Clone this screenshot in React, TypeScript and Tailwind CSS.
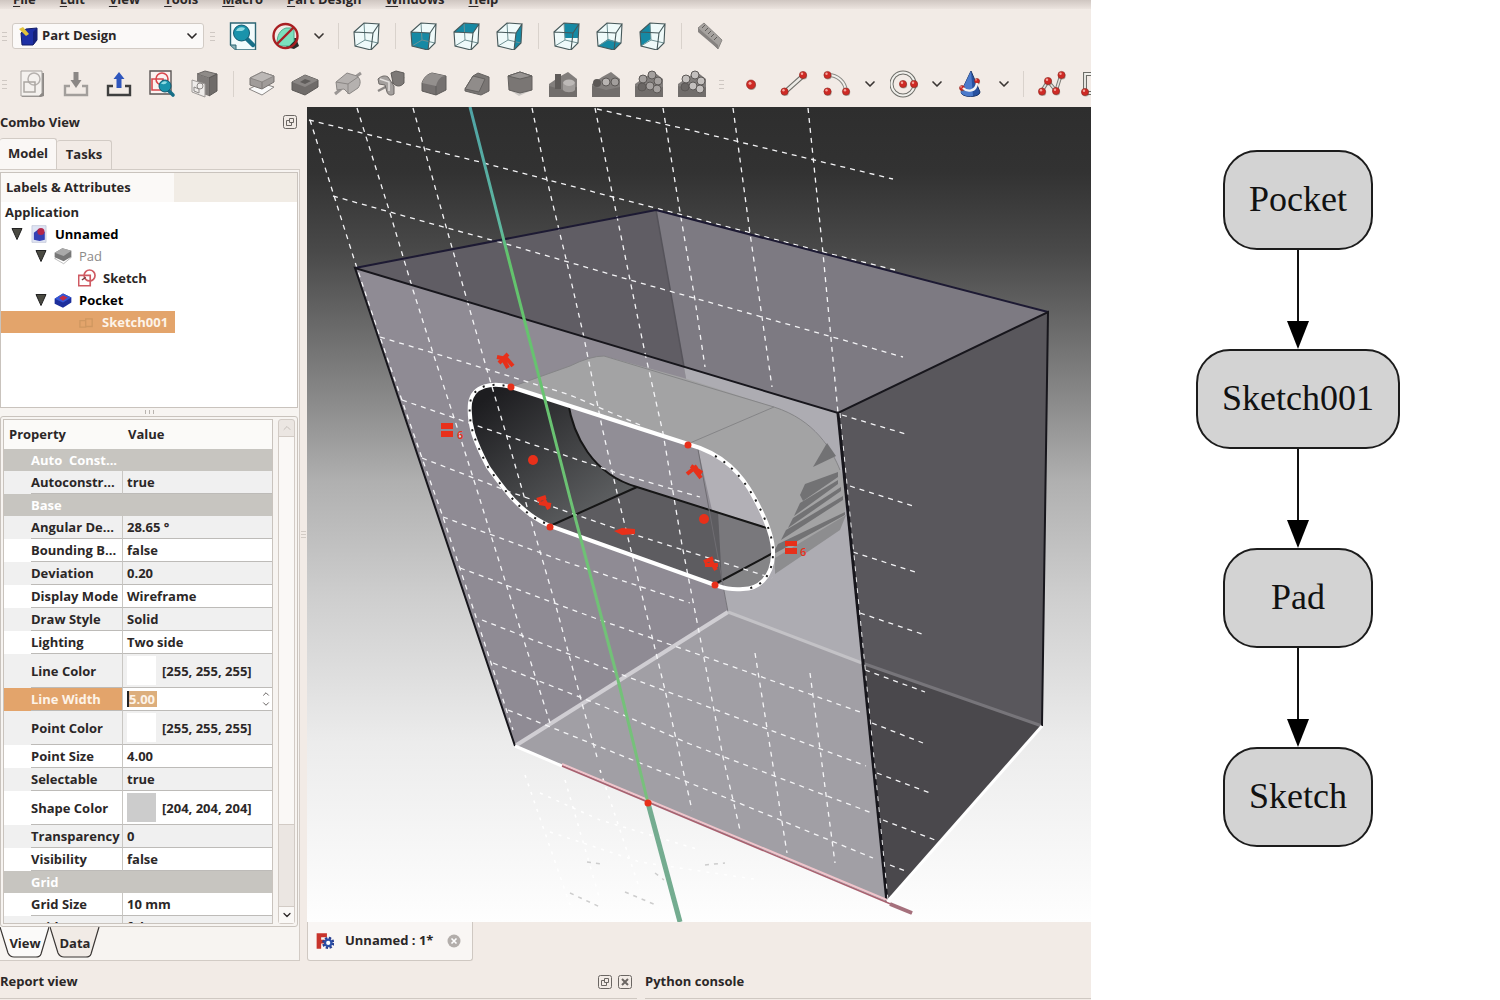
import { Fragment } from "react";
import type { ReactNode } from "react";
import { ChevronDown, ChevronUp } from "lucide-react";

const MENU = ["File", "Edit", "View", "Tools", "Macro", "Part Design", "Windows", "Help"];

/* ---------- icons ---------- */

function Icon({ children, size = "size-[28px]" }: { children: ReactNode; size?: string }) {
  return (
    <svg viewBox="0 0 28 28" className={`${size} shrink-0`} fill="none" aria-hidden="true">
      {children}
    </svg>
  );
}

const CUBE_FACES = {
  front: "M1 10 20 11 18 28 2 24Z",
  top: "M1 10 11 1 26 2 20 11Z",
  right: "M20 11 26 2 25 21 18 28Z",
  rear: "M11 1 26 2 25 16 12 16Z",
  bottom: "M2 24 12 17 25 21 18 28Z",
  left: "M1 10 11 1 12 17 2 24Z",
};

function CubeIcon({ face }: { face?: keyof typeof CUBE_FACES }) {
  return (
    <Icon>
      <path d="M1 10 11 1 26 2 25 21 18 28 2 24Z" fill="#effafa" />
      {face && <path d={CUBE_FACES[face]} fill="#1689a4" />}
      <path d="M11 1 12 18 25 21M12 18 2 24" stroke="#6f9193" strokeWidth="1" />
      <path d="M1 10 20 11 18 28 2 24ZM1 10 11 1 26 2 20 11M26 2 25 21 18 28" stroke="#46585a" strokeWidth="1.1" />
    </Icon>
  );
}

function Ball({ x, y, r = 3.6 }: { x: number; y: number; r?: number }) {
  return (
    <g>
      <circle cx={x + 0.6} cy={y + 1} r={r} fill="#6d6a60" opacity="0.5" />
      <circle cx={x} cy={y} r={r} fill="#cf2a25" stroke="#8d2620" strokeWidth="0.6" />
      <circle cx={x - 1} cy={y - 1.2} r={r / 3} fill="#f4a49c" />
    </g>
  );
}

const FitIcon = () => (
  <Icon>
    <path d="M1.500 1h25v27H7l-5.500-5Z" fill="#f2fbfc" stroke="#2c6674" strokeWidth="1.400" />
    <path d="M1.500 23H7v5" fill="#8ab2b8" stroke="#2c6674" />
    <path d="m17 16 7 7" stroke="#176f88" strokeWidth="4.500" strokeLinecap="round" />
    <circle cx="12.500" cy="11" r="8" fill="#1a93ab" stroke="#145a70" />
    <path d="M7 9a6 5 0 0 1 9-3c-1 4-5 3-9 3Z" fill="#8fdbe2" />
  </Icon>
);

const DrawStyleIcon = () => (
  <Icon>
    <path d="M20 16h4l3 8-5 3-8-2Z" fill="#2a2a2a" />
    <path d="M5 22c0-9 3-14 9-16h8v13l-5 5H6Z" fill="#7be0bd" stroke="#4fa98c" />
    <circle cx="13.500" cy="14" r="12" stroke="#a81f22" strokeWidth="2.400" />
    <path d="m5 22 17-17" stroke="#a81f22" strokeWidth="2.400" />
  </Icon>
);

const RulerIcon = () => (
  <Icon>
    <path d="M2 6 8 1l18 17-4 9Z" fill="#a5a19e" stroke="#8b8784" />
    <path d="m2 6 20 17v4L2 10Z" fill="#868280" />
    <path d="m9 3-3 3M12 6l-3 3M15 9l-3 3M18 12l-3 3M21 15l-3 3" stroke="#5f5c5a" />
  </Icon>
);

const SketchNewIcon = () => (
  <Icon>
    <path d="M3 3h22v23l-3 1H3Z" fill="#8d8986" />
    <path d="M2 1h21v22l-3 3H2Z" fill="#f4f1ee" stroke="#a5a19e" />
    <circle cx="15" cy="9" r="6" stroke="#b5b1ae" strokeWidth="1.500" />
    <path d="M5 12h11v10H5Z" stroke="#aaa6a3" strokeWidth="1.500" />
  </Icon>
);

function TrayIcon({ arrow, tray, up }: { arrow: string; tray: string; up?: boolean }) {
  return (
    <Icon>
      <path d="M8 16H3v9h22v-9h-5" stroke={tray} strokeWidth="2.400" />
      <path d={up ? "M14 2 19.500 9h-3v9h-5V9h-3Z" : "M11.500 2h5v8h3L14 18l-5.500-8h3Z"} fill={arrow} />
    </Icon>
  );
}

const SketchViewIcon = () => (
  <Icon>
    <path d="M2 1h21v23H2Z" fill="#fbf2f0" stroke="#5b5654" strokeWidth="1.400" />
    <circle cx="14" cy="9" r="6" stroke="#d8474c" strokeWidth="1.600" />
    <path d="M4 9h11v11H4Z" stroke="#d8474c" strokeWidth="1.600" />
    <path d="m20 20 5 5" stroke="#176f88" strokeWidth="3.600" strokeLinecap="round" />
    <circle cx="17" cy="16" r="6" fill="#1a93ab" stroke="#145a70" />
    <path d="M13 14a4 4 0 0 1 6-2c-1 3-4 2-6 2Z" fill="#8fdbe2" />
  </Icon>
);

const MapSketchIcon = () => (
  <Icon>
    <path d="m6 4 8-3 12 3-8 4Z" fill="#8f8b88" stroke="#6b6765" />
    <path d="m18 8 8-4v17l-8 5Z" fill="#6f6b69" stroke="#5c5957" />
    <path d="m6 4 12 4v18L6 22Z" fill="#807c7a" />
    <path d="m1 10 13 4v13L1 22Z" fill="#efecea" stroke="#9d9997" />
    <circle cx="9" cy="16" r="3" stroke="#8d8987" />
    <path d="m3 17 5 2v4l-5-2Z" stroke="#8d8987" />
  </Icon>
);

const PadIcon = () => (
  <Icon>
    <path d="m1 19 12-6 13 4-12 8Z" fill="#fafafa" stroke="#8b8785" />
    <path d="m2 8 12-6 12 4v6l-12 7-12-4Z" fill="#a09c9a" stroke="#777371" />
    <path d="m2 8 12-6 12 4-12 6Z" fill="#bcb8b6" stroke="#8b8785" />
    <path d="M14 12v7" stroke="#7d7977" />
  </Icon>
);

const PocketIcon = () => (
  <Icon>
    <path d="m1 12 13-7 13 5v7l-13 8-13-5Z" fill="#6f6b69" stroke="#5b5856" />
    <path d="m1 12 13-7 13 5-13 7Z" fill="#8a8684" />
    <path d="m9 12 5-3 6 2-6 3Z" fill="#5f5c5a" />
  </Icon>
);

const RevolveIcon = () => (
  <Icon>
    <path d="m1 24 6-5M20 8l7-5" stroke="#9a9694" strokeWidth="3" />
    <path d="M2 12 13 3l10 3c4 3 4 8 1 12l-9 6-5-5-7 1Z" fill="#b5b1af" stroke="#8b8785" />
    <path d="m2 12 12 2 10-7M14 14v10" stroke="#8b8785" />
  </Icon>
);

const GrooveIcon = () => (
  <Icon>
    <path d="m1 21 26-14" stroke="#8b8785" strokeWidth="2.500" />
    <path d="M1 9c3-3 7-4 10-2l6 9v8c-3 2-6 1-7-2l-2-7-6-1Z" fill="#a4a09e" stroke="#6d6967" />
    <path d="m14 3 5-2 8 2v10c-3 4-8 4-11 0Z" fill="#7d7977" stroke="#5f5c5a" />
    <path d="m3 9 9 3v9" stroke="#e3e0de" strokeWidth="1.500" />
  </Icon>
);

const FilletIcon = () => (
  <Icon>
    <path d="M2 13c2-6 6-9 10-10l14 3v14l-10 5-14-4Z" fill="#757170" stroke="#5f5c5a" />
    <path d="M2 13c2-6 6-9 10-10l14 3c-5 0-8 3-10 10Z" fill="#94908e" />
    <path d="M16 16v9" stroke="#5f5c5a" />
  </Icon>
);

const ChamferIcon = () => (
  <Icon>
    <path d="m2 19 8-13 5-3 11 4v14l-8 4-16-4Z" fill="#7a7674" stroke="#64615f" />
    <path d="m2 19 8-13 12 3-6 13Z" fill="#908c8a" stroke="#64615f" />
  </Icon>
);

const DraftIcon = () => (
  <Icon>
    <path d="m2 19 12-3 12 4-13 6Z" fill="#cbc7c4" />
    <path d="m2 6 12-4 12 4v14l-12 3-11-3Z" fill="#7a7674" stroke="#64615f" />
    <path d="m2 6 12-4 12 4-12 3Z" fill="#989492" stroke="#64615f" />
  </Icon>
);

function PatternIcon({ kind }: { kind: "mirror" | "linear" | "polar" | "multi" }) {
  return (
    <Icon>
      <path d="M0 14 10 7l9-5 9 7v18H0Z" fill="#827e7c" />
      <path d="m0 16 14 4 14-3v10H0Z" fill="#716d6b" />
      {kind === "mirror" && (
        <>
          <path d="M6 4h6v15H6Z" fill="#5f5b59" />
          <ellipse cx="20" cy="13" rx="6" ry="3.500" fill="#bdb9b7" />
          <path d="M14 13v7c2 3 10 3 12 0v-7c-2 4-10 4-12 0Z" fill="#a09c9a" />
        </>
      )}
      {kind === "linear" && (
        <>
          <circle cx="5" cy="13" r="4" fill="#5c5856" />
          <circle cx="14" cy="12" r="4" fill="#b8b4b2" stroke="#5c5856" />
          <circle cx="23" cy="12" r="4" fill="#a29e9c" stroke="#5c5856" />
        </>
      )}
      {(kind === "polar" || kind === "multi") && (
        <g fill={kind === "polar" ? "#a4a09e" : "#c4c0be"} stroke="#5c5856">
          <circle cx="17" cy="5" r="4" />
          <circle cx="8" cy="9" r="4" />
          <circle cx="23" cy="11" r="4" />
          <circle cx="7" cy="17" r="4" fill="#6a6664" />
          <circle cx="15" cy="16" r="4" />
          <circle cx="22" cy="19" r="4" />
        </g>
      )}
    </Icon>
  );
}

const PointIcon = () => (
  <Icon>
    <Ball x={14} y={14.5} r={4.5} />
  </Icon>
);

const LineIcon = () => (
  <Icon>
    <path d="m5 22 19-17" stroke="#6d6d68" strokeWidth="5" />
    <path d="m5 22 19-17" stroke="#ecebe6" strokeWidth="2.600" />
    <Ball x={4.5} y={21.5} />
    <Ball x={23} y={5} />
  </Icon>
);

const ArcIcon = () => (
  <Icon>
    <path d="M5 5c10 0 17 7 18 16" stroke="#8b8b86" strokeWidth="4" />
    <path d="M5 5c10 0 17 7 18 16" stroke="#f1f0ec" strokeWidth="2" />
    <Ball x={4.5} y={5} />
    <Ball x={4.5} y={21.5} />
    <Ball x={23} y={21.5} />
  </Icon>
);

const CircleIcon = () => (
  <Icon>
    <circle cx="13" cy="14" r="11.500" stroke="#6d6d68" strokeWidth="4" />
    <circle cx="13" cy="14" r="11.500" stroke="#f1f0ec" strokeWidth="2" />
    <Ball x={13} y={14} />
    <Ball x={24} y={14} />
  </Icon>
);

const ConicIcon = () => (
  <Icon>
    <path d="m14 1 9 21c0 6-19 6-19 0Z" fill="#27519f" stroke="#1b3568" />
    <path d="m14 1 2 25c-5 1-12-1-12-4Z" fill="#4b7acb" />
    <Ball x={5} y={18} r={2.5} />
    <Ball x={20} y={11} r={2.5} />
    <path d="M6 18c4 4 13 4 14-5" stroke="#f4f4f4" strokeWidth="2.400" />
  </Icon>
);

const PolylineIcon = () => (
  <Icon>
    <path d="m4 21 6-10 8 10 5-16" stroke="#777772" strokeWidth="3.600" />
    <path d="m4 21 6-10 8 10 5-16" stroke="#e5e4df" strokeWidth="1.600" />
    <Ball x={4} y={21.5} />
    <Ball x={10} y={11} />
    <Ball x={18} y={21} />
    <Ball x={23.5} y={5} />
  </Icon>
);

const RectIcon = () => (
  <Icon>
    <path d="M4 4h22v19H4Z" stroke="#6d6d68" strokeWidth="4" />
    <path d="M4 4h22v19H4Z" stroke="#f1f0ec" strokeWidth="1.800" />
    <Ball x={4} y={22} />
  </Icon>
);

const FloatIcon = () => (
  <svg viewBox="0 0 14 14" className="size-[14px]" fill="none" stroke="#6b6663" aria-hidden="true">
    <rect x="0.5" y="0.500" width="13" height="13" rx="2" />
    <path d="M6.500 3.500h4v4h-4ZM6.500 5.500h-3v5h5v-3" />
  </svg>
);

const CloseIcon = () => (
  <svg viewBox="0 0 14 14" className="size-[14px]" fill="none" stroke="#6b6663" aria-hidden="true">
    <rect x="0.5" y="0.500" width="13" height="13" rx="2" />
    <path d="m4 4 6 6M10 4l-6 6" strokeWidth="2" />
  </svg>
);

/* ---------- toolbars ---------- */

type ToolItem = { name: string; icon: ReactNode } | "sep" | "menu" | "grip";

const VIEW_TOOLS: ToolItem[] = [
  { name: "Fit all", icon: <FitIcon /> },
  { name: "Draw style", icon: <DrawStyleIcon /> },
  "menu",
  "sep",
  { name: "Axonometric", icon: <CubeIcon /> },
  "sep",
  { name: "Front", icon: <CubeIcon face="front" /> },
  { name: "Top", icon: <CubeIcon face="top" /> },
  { name: "Right", icon: <CubeIcon face="right" /> },
  "sep",
  { name: "Rear", icon: <CubeIcon face="rear" /> },
  { name: "Bottom", icon: <CubeIcon face="bottom" /> },
  { name: "Left", icon: <CubeIcon face="left" /> },
  "sep",
  { name: "Measure distance", icon: <RulerIcon /> },
];

const PART_TOOLS: ToolItem[] = [
  { name: "Create sketch", icon: <SketchNewIcon /> },
  { name: "Edit sketch", icon: <TrayIcon arrow="#8b8785" tray="#a29e9b" /> },
  { name: "Leave sketch", icon: <TrayIcon arrow="#2f56bd" tray="#3f3f3f" up /> },
  { name: "View sketch", icon: <SketchViewIcon /> },
  { name: "Map sketch to face", icon: <MapSketchIcon /> },
  "sep",
  { name: "Pad", icon: <PadIcon /> },
  { name: "Pocket", icon: <PocketIcon /> },
  { name: "Revolution", icon: <RevolveIcon /> },
  { name: "Groove", icon: <GrooveIcon /> },
  { name: "Fillet", icon: <FilletIcon /> },
  { name: "Chamfer", icon: <ChamferIcon /> },
  { name: "Draft", icon: <DraftIcon /> },
  { name: "Mirrored", icon: <PatternIcon kind="mirror" /> },
  { name: "Linear pattern", icon: <PatternIcon kind="linear" /> },
  { name: "Polar pattern", icon: <PatternIcon kind="polar" /> },
  { name: "Multi transform", icon: <PatternIcon kind="multi" /> },
  "grip",
  { name: "Point", icon: <PointIcon /> },
  { name: "Line", icon: <LineIcon /> },
  { name: "Arc", icon: <ArcIcon /> },
  "menu",
  { name: "Circle", icon: <CircleIcon /> },
  "menu",
  { name: "Conic", icon: <ConicIcon /> },
  "menu",
  "sep",
  { name: "Polyline", icon: <PolylineIcon /> },
  { name: "Rectangle", icon: <RectIcon /> },
];

function Grip({ className }: { className: string }) {
  return (
    <span className={`flex shrink-0 flex-col gap-[3px] ${className}`}>
      <i className="h-px w-[5px] bg-[#cfc8c3]" />
      <i className="h-px w-[5px] bg-[#cfc8c3]" />
      <i className="h-px w-[5px] bg-[#cfc8c3]" />
    </span>
  );
}

function Tools({ items }: { items: ToolItem[] }) {
  return items.map((item, i) => {
    if (item === "sep") {
      return (
        <span key={i} className="flex w-[14px] shrink-0 justify-center">
          <i className="h-[26px] w-px bg-[#d9d2cc]" />
        </span>
      );
    }
    if (item === "grip") return <Grip key={i} className="w-[16px] items-center" />;
    if (item === "menu") {
      return (
        <button key={i} type="button" aria-label="More" className="flex w-[24px] shrink-0 justify-center">
          <ChevronDown className="size-[16px] text-[#3a3533]" strokeWidth={2.5} />
        </button>
      );
    }
    return (
      <button key={i} type="button" aria-label={item.name} className="flex w-[43px] shrink-0 justify-center">
        {item.icon}
      </button>
    );
  });
}

/* ---------- combo view ---------- */

const DocIcon = () => (
  <Icon size="size-[18px]">
    <path d="M3 1h22v26H3Z" fill="#dfe4f4" stroke="#b9bfd2" />
    <path d="m6 12 8-6 9 5v12l-8 2-9-2Z" fill="#3440b4" />
    <circle cx="17" cy="10" r="5.500" fill="#b3264a" />
  </Icon>
);

const TreePadIcon = () => (
  <Icon size="size-[18px]">
    <path d="m1 18 12-6 14 4-12 10Z" fill="#fff" stroke="#999" />
    <path d="m1 9 12-7 14 4v9l-12 7-14-6Z" fill="#777" />
    <path d="m1 9 12-7 14 4-12 8Z" fill="#a9a9a9" />
  </Icon>
);

const TreeSketchIcon = () => (
  <Icon size="size-[18px]">
    <circle cx="18" cy="10" r="8.500" stroke="#cf5a62" strokeWidth="2.600" />
    <path d="M1 10h18v16H1Z" stroke="#cf5a62" strokeWidth="2.600" />
    <path d="m6 17 6-4" stroke="#6d3a3d" strokeWidth="2" />
  </Icon>
);

const TreePocketIcon = () => (
  <Icon size="size-[18px]">
    <path d="m1 12 13-8 13 6v8l-13 8-13-6Z" fill="#1d2f9c" />
    <path d="m1 12 13-8 13 6-13 8Z" fill="#3557d6" />
    <path d="m8 11 6-4 7 3-7 5Z" fill="#c22b44" />
  </Icon>
);

const FaintSketchIcon = () => (
  <Icon size="size-[18px]">
    <path d="M3 12h9v10H3ZM12 9h10v12H12Z" stroke="#cf9760" strokeWidth="2" />
  </Icon>
);

type TreeNode = { label: string; indent: string; icon: ReactNode; open?: boolean; tone?: string };

const TREE: TreeNode[] = [
  { label: "Unnamed", indent: "pl-[10px]", icon: <DocIcon />, open: true, tone: "text-black" },
  { label: "Pad", indent: "pl-[34px]", icon: <TreePadIcon />, open: true, tone: "font-medium text-[#8c8a89]" },
  { label: "Sketch", indent: "pl-[58px]", icon: <TreeSketchIcon /> },
  { label: "Pocket", indent: "pl-[34px]", icon: <TreePocketIcon />, open: true, tone: "text-black" },
];

function ModelTree() {
  return (
    <div className="h-[236px] shrink-0 border border-[#c9c3bd] bg-white">
      <div className="flex h-[29px] bg-[#f1ece5]">
        <span className="w-[173px] bg-[#fbf9f7] pl-[5px] leading-[28px]">Labels &amp; Attributes</span>
      </div>
      <ul className="leading-[22px]">
        <li className="h-[21px] pl-[4px] leading-[20px]">Application</li>
        {TREE.map((node) => (
          <li key={node.label} className={`flex h-[22px] items-center ${node.indent}`}>
            <span className="flex w-[19px] shrink-0">
              {node.open && (
                <svg viewBox="0 0 12 12" className="size-[12px]" aria-hidden="true">
                  <path d="M1 0.500h10L6 11.500Z" fill="#4a4a42" stroke="#222" />
                </svg>
              )}
            </span>
            {node.icon}
            <span className={`pl-[7px] ${node.tone ?? ""}`}>{node.label}</span>
          </li>
        ))}
        <li className="flex h-[22px] w-[174px] items-center bg-[#e3a46b] pl-[77px] text-[#fdf3e8]">
          <FaintSketchIcon />
          <span className="pl-[6px]">Sketch001</span>
        </li>
      </ul>
    </div>
  );
}

type Property = { group: string } | { name: string; value: string; swatch?: string; editing?: boolean };

const PROPERTIES: Property[] = [
  { group: "Auto  Const..." },
  { name: "Autoconstr...", value: "true" },
  { group: "Base" },
  { name: "Angular De...", value: "28.65 °" },
  { name: "Bounding B...", value: "false" },
  { name: "Deviation", value: "0.20" },
  { name: "Display Mode", value: "Wireframe" },
  { name: "Draw Style", value: "Solid" },
  { name: "Lighting", value: "Two side" },
  { name: "Line Color", value: "[255, 255, 255]", swatch: "bg-white" },
  { name: "Line Width", value: "5.00", editing: true },
  { name: "Point Color", value: "[255, 255, 255]", swatch: "bg-white" },
  { name: "Point Size", value: "4.00" },
  { name: "Selectable", value: "true" },
  { name: "Shape Color", value: "[204, 204, 204]", swatch: "bg-[#cccccc]" },
  { name: "Transparency", value: "0" },
  { name: "Visibility", value: "false" },
  { group: "Grid" },
  { name: "Grid Size", value: "10 mm" },
  { name: "Grid Snap", value: "false" },
];

function PropertyTable() {
  return (
    <table className="w-full table-fixed border-separate border-spacing-0 text-left">
      <colgroup>
        <col className="w-[27px]" />
        <col className="w-[92px]" />
        <col />
      </colgroup>
      <thead>
        <tr className="h-[29px] bg-[#fbfaf8]">
          <th colSpan={2} className="p-0 pl-[5px]">
            Property
          </th>
          <th className="p-0 pl-[5px]">Value</th>
        </tr>
      </thead>
      <tbody>
        {PROPERTIES.map((prop, i) => {
          if ("group" in prop) {
            return (
              <tr key={i} className="h-[22px] bg-[#c7c5c0] text-white">
                <td />
                <th colSpan={2} className="p-0 leading-[20px] whitespace-pre">
                  {prop.group}
                </th>
              </tr>
            );
          }
          const tint = i % 2 ? "bg-[#f0f0f0]" : "bg-white";
          const row = prop.editing ? "bg-white" : tint;
          const label = prop.editing ? "bg-[#e3a46b] text-[#fdf3e8]" : "";
          return (
            <tr key={i} className={`${prop.swatch ? "h-[34px]" : "h-[23px]"} ${row}`}>
              <td className={label} />
              <td
                className={`border-r border-b border-r-[#c9c7c3] border-b-[#bdbbb8] p-0 leading-[20px] whitespace-nowrap ${label}`}
              >
                <span id={`prop-${i}`}>{prop.name}</span>
              </td>
              <td className="border-b border-[#bdbbb8] p-0 pl-[4px] leading-[20px] whitespace-nowrap">
                {prop.editing ? (
                  <span className="flex h-[22px] items-center justify-between pr-px">
                    <span className="flex border-l-2 border-[#222] bg-[#dcae7c]">
                      <input
                        type="text"
                        aria-labelledby={`prop-${i}`}
                        defaultValue={prop.value}
                        className="h-[16px] w-[28px] text-[#fdf3e8]"
                      />
                    </span>
                    <span className="flex flex-col text-[#4b4644]">
                      <ChevronUp className="size-[10px]" />
                      <ChevronDown className="size-[10px]" />
                    </span>
                  </span>
                ) : prop.swatch ? (
                  <span className="flex items-center gap-[6px]">
                    <i className={`size-[29px] ${prop.swatch}`} />
                    {prop.value}
                  </span>
                ) : (
                  prop.value
                )}
              </td>
            </tr>
          );
        })}
      </tbody>
    </table>
  );
}

function BottomTab({ label, active }: { label: string; active?: boolean }) {
  return (
    <button type="button" className="relative h-[31px] w-[50px] leading-[28px]">
      <svg viewBox="0 0 50 31" className="absolute inset-0 size-full" aria-hidden="true">
        <path d="M0 0 8 26q2 4 6 4h22q4 0 5-3L49 0" fill={active ? "#fbfaf9" : "#f1ebe6"} stroke="#3a3634" strokeWidth="1.200" />
      </svg>
      <span className="relative">{label}</span>
    </button>
  );
}

function ComboView() {
  return (
    <aside className="flex w-[300px] shrink-0 flex-col">
      <div className="flex h-[30px] shrink-0 items-center justify-between pr-[3px]">
        <h2 className="leading-[20px]">Combo View</h2>
        <button type="button" aria-label="Float panel">
          <FloatIcon />
        </button>
      </div>
      <div role="tablist" className="flex h-[32px] shrink-0 items-end">
        <button
          role="tab"
          aria-selected="true"
          type="button"
          className="h-[31px] w-[57px] rounded-t-[3px] border border-b-0 border-l-0 border-[#d2cbc5] bg-[#faf7f5]"
        >
          Model
        </button>
        <button
          role="tab"
          aria-selected="false"
          type="button"
          className="h-[29px] w-[55px] rounded-t-[3px] border border-b-0 border-l-0 border-[#d2cbc5]"
        >
          Tasks
        </button>
      </div>
      <div className="flex min-h-0 flex-1 flex-col border border-l-0 border-[#d2cbc5] bg-[#f7f4f1] pt-[2px] pr-px">
        <ModelTree />
        <div className="flex h-[8px] shrink-0 items-center justify-center gap-[3px]">
          <i className="h-[4px] w-px bg-[#b9b4af]" />
          <i className="h-[4px] w-px bg-[#b9b4af]" />
          <i className="h-[4px] w-px bg-[#b9b4af]" />
        </div>
        <div className="flex min-h-0 flex-1 gap-[5px] rounded-[3px] border border-[#c9c3bd] p-[2px]">
          <div className="min-h-0 flex-1 overflow-hidden border border-[#c9c3bd]">
            <PropertyTable />
          </div>
          <div className="flex w-[17px] flex-col rounded-[3px] border border-[#d2cbc5] bg-[#ebe6e2]">
            <button
              type="button"
              aria-label="Scroll up"
              className="flex h-[17px] items-center justify-center border-b border-[#d2cbc5] text-[#c5bfba]"
            >
              <ChevronUp className="size-[12px]" />
            </button>
            <div className="h-[388px] border-b border-[#d2cbc5] bg-[#faf8f6]" />
            <div className="flex-1" />
            <button
              type="button"
              aria-label="Scroll down"
              className="flex h-[17px] items-center justify-center border-t border-[#d2cbc5] bg-[#faf8f6]"
            >
              <ChevronDown className="size-[12px]" strokeWidth={2.5} />
            </button>
          </div>
        </div>
        <div className="flex h-[33px] shrink-0">
          <BottomTab label="View" active />
          <BottomTab label="Data" />
        </div>
      </div>
    </aside>
  );
}

/* ---------- 3D view ---------- */

const GRID_STEEP = [
  "310,120 355,262 380,337 422,458 443,517 477,620 513,730",
  "357,108 390,213 413,290 433,353 457,427 477,490 507,587 550,723",
  "413,108 447,230 467,300 487,370 507,437 530,517 557,610 583,707 597,757",
  "532,108 547,180 567,263 583,333 602,427 618,497 640,587 665,690 692,810",
  "595,108 613,197 630,280 645,353 663,433 682,545 700,637 723,757 740,830",
  "663,108 678,200 695,300 705,367",
  "755,653 787,853",
  "733,108 750,233 762,317 772,387",
  "810,673 835,863",
  "808,108 823,253 838,413",
];

const GRID_CROSS = [
  "597,109 690,130 893,179",
  "309,120 480,162 613,197 656,208 823,252 895,270",
  "333,196 447,228 503,243 630,280 762,317 903,357",
  "842,415 909,435",
  "380,337 483,368 570,395 640,425",
  "850,486 913,506",
  "402,400 472,424 620,474 700,497",
  "853,552 915,572",
  "422,458 510,492 620,530 772,578",
  "860,613 922,634",
  "443,517 560,560 690,603",
  "865,670 925,692",
  "460,568 600,620 700,655 860,712",
  "872,723 923,743",
  "482,620 620,674 690,700 866,766",
  "877,773 930,793",
  "493,663 600,705 690,744 872,813",
  "883,820 935,840",
  "508,710 690,783 873,858",
  "890,865 908,872",
];

const GRID_FLOOR = [
  "525,775 570,905",
  "565,780 600,900",
  "600,770 640,890",
  "540,793 600,820 700,850",
  "550,832 640,862 760,880",
];

const GRID_SHADOW = ["570,893 600,907", "625,892 656,905", "587,862 602,864", "655,873 664,880", "705,865 725,863"];

const SLOT =
  "M511 387 688 444C724 454 742 474 755 499 768 523 774 541 773 555 772 578 758 589 743 589 731 590 724 588 715 585L550 526C520 513 503 488 488 467 475 442 468 425 470 403 473 385 492 382 511 387Z";

const SLOT_BACK = "M568 402C573 435 592 474 637 487L771 529 800 500 760 440 690 430Z";

const DOTS = [
  [511, 387],
  [688, 445],
  [550, 527],
  [715, 585],
  [648, 803],
];

const STRIPES = [
  "827,443 836,456 813,467",
  "838,472 838,477 803,501 800,495 805,484",
  "838,480 838,484 794,516 800,503",
  "841,487 841,491 788,528 793,518",
  "843,496 843,500 781,540 786,530",
  "845,512 845,515 772,555 778,544",
];

function Viewport() {
  return (
    <svg
      viewBox="307 107 784 815"
      preserveAspectRatio="xMidYMid slice"
      className="min-h-0 w-full flex-1"
      role="img"
      aria-label="3D view of the pocketed box"
    >
      <defs>
        <linearGradient id="sky" x1="0" y1="0" x2="0" y2="1">
          <stop offset="0" stopColor="#2e2e2e" />
          <stop offset="0.080" stopColor="#323232" />
          <stop offset="0.180" stopColor="#4a4a4a" />
          <stop offset="0.360" stopColor="#8a8a8a" />
          <stop offset="0.460" stopColor="#b0b0b0" />
          <stop offset="0.600" stopColor="#cecece" />
          <stop offset="0.780" stopColor="#ececec" />
          <stop offset="1" stopColor="#fefefe" />
        </linearGradient>
        <linearGradient id="bore" gradientUnits="userSpaceOnUse" x1="490" y1="395" x2="590" y2="530">
          <stop offset="0" stopColor="#1d1d20" />
          <stop offset="0.500" stopColor="#3f4042" />
          <stop offset="1" stopColor="#616365" />
        </linearGradient>
        <linearGradient id="axis" gradientUnits="userSpaceOnUse" x1="0" y1="107" x2="0" y2="922">
          <stop offset="0" stopColor="#4fa3a6" />
          <stop offset="0.150" stopColor="#5fb9a0" />
          <stop offset="0.180" stopColor="#62c46c" />
          <stop offset="0.840" stopColor="#78c07c" />
          <stop offset="1" stopColor="#7db79a" />
        </linearGradient>
        <clipPath id="slot">
          <path d={SLOT} />
        </clipPath>
      </defs>
      <rect x="-1000" y="107" width="3400" height="815" fill="url(#sky)" />

      {/* box faces */}
      <path d="M355 268 656 210 684 367Z" fill="#605d64" />
      <path d="M656 210 1048 312 838 413 684 367Z" fill="#7d7a82" />
      <path d="M838 413 1048 312 1042 726 887 902Z" fill="#59575c" />
      <path d="M862 663 1042 726 887 902Z" fill="#4a484c" />
      <path d="M355 268 684 367 728 612 515 746Z" fill="#8f8b94" />
      <path d="M684 367 838 413 862 663 728 612Z" fill="#adacb2" />
      <path d="M515 746 728 612 862 663 887 902Z" fill="#a19fa5" />

      {/* outer wall of the pocket */}
      <path
        d="M511 387 570 366Q590 356 604 356L684 378 774 407C815 420 838 455 847 490 848 515 840 530 815 545L775 570 688 444Z"
        fill="#a3a3a4"
      />
      <path
        d="M511 387 570 366Q590 356 604 356L774 407C815 420 832 450 840 470M690 443 774 407"
        stroke="#858587"
        fill="none"
      />
      <path d="M846 515 840 530 775 574 775 558Z" fill="#8d8d8f" />
      {STRIPES.map((points) => (
        <polygon key={points} points={points} fill="#727274" />
      ))}

      <g clipPath="url(#slot)">
        <path d={SLOT} fill="url(#bore)" />
        <path d="M550 526 637 487 780 532 780 600 700 590Z" fill="#5d5c60" />
        <path d="M718 512 780 532 780 556 722 583Z" fill="#79787c" />
        <path d="M715 584 772 554 780 600Z" fill="#858587" />
        <path d={SLOT_BACK} fill="#918e96" />
        <path d="M696 440 712 510 775 530 790 480 740 440Z" fill="#b2b0b6" />
        <path
          d="M568 402C573 435 592 474 637 487L773 530M550 526 637 487M715 584 773 553"
          stroke="#161616"
          strokeWidth="2"
          fill="none"
        />
        <path d="M697 444 728 612" stroke="#6f6d72" />
      </g>

      <path d="M656 210 684 367" stroke="#55535a" strokeWidth="1.500" />
      <path d="M722 580 728 612" stroke="#77757b" />
      <path d="M515 746 728 612" stroke="#d0ced3" strokeWidth="4" />
      <path d="M728 612 862 663" stroke="#c3c2c6" strokeWidth="3" />
      <path d="M862 663 1042 726" stroke="#77757a" strokeWidth="3" />

      {/* sketch grid */}
      <g fill="none" stroke="#f4f4f6" strokeWidth="1.300" strokeDasharray="5 5">
        {[...GRID_STEEP, ...GRID_CROSS].map((points) => (
          <polyline key={points} points={points} />
        ))}
      </g>
      <g fill="none" stroke="#fff" strokeWidth="1.500" strokeDasharray="3 6">
        {GRID_FLOOR.map((points) => (
          <polyline key={points} points={points} />
        ))}
      </g>
      <g fill="none" stroke="#cdcdcd" strokeWidth="1.500" strokeDasharray="4 5">
        {GRID_SHADOW.map((points) => (
          <polyline key={points} points={points} />
        ))}
      </g>

      {/* box edges */}
      <path d="M355 268 656 210 1048 312" stroke="#1d1a33" strokeWidth="2" fill="none" />
      <path d="M515 746 355 268 838 413 1048 312 1042 726" stroke="#17161c" strokeWidth="2" fill="none" />
      <path d="M838 413 887 902" stroke="#17161c" strokeWidth="3" />
      <path d="M840 413 888 900" stroke="#e8e8ea" strokeDasharray="5 6" />
      <path d="M1042 726 887 902" stroke="#fff" strokeWidth="3" />
      <path d="M515 746 562 766" stroke="#fff" strokeWidth="3" />
      <path d="M562 764 887 900" stroke="#f0c5cc" strokeWidth="2" />
      <path d="M562 766 912 913" stroke="#a8606f" strokeWidth="1.500" />
      <path d="M890 904 912 913" stroke="#a5707c" strokeWidth="4" />

      <path d={SLOT} fill="none" stroke="#fff" strokeWidth="4" />
      <path
        d="M715 456C735 467 748 487 755 499 768 523 774 541 773 555 772 578 758 589 743 589M545 523C520 513 503 488 488 467 475 442 468 425 470 403 473 385 492 382 511 387"
        fill="none"
        stroke="#1b1b1b"
        strokeWidth="2"
        strokeDasharray="2 8"
      />
      <path d="M470 107 503 237 545 400 570 498 618 680 648 803" stroke="url(#axis)" strokeWidth="3" fill="none" />
      <path d="M648 803 680 922" stroke="#74ac90" strokeWidth="5" />

      {/* constraints */}
      <g fill="#e8301a">
        {DOTS.map(([x, y]) => (
          <circle key={x} cx={x} cy={y} r="3.500" />
        ))}
        <circle cx="533" cy="460" r="5" />
        <circle cx="704" cy="519" r="5" />
        <path d="M441 423h12v6h-12ZM441 431h12v6h-12ZM785 541h12v5h-12ZM785 548h12v6h-12Z" />
        <path d="M614 531 622 528 635 529 635 534 622 535Z" />
      </g>
      <g stroke="#e8301a" strokeWidth="4" fill="none">
        <path d="m497 357 10 2 6 7M499 363l9-9M503 359l5 9" />
        <path d="m687 474 10-8M691 466l11 7M694 469l7 9" />
        <path d="m537 500 9-3M539 503l12 2M544 500l5 9" />
        <path d="m704 562 9-4M705 565l13 0M711 561l5 9" />
      </g>
      <g fill="#e8301a" className="font-['Open_Sans'] text-[11px] font-semibold">
        <text x="457" y="439">
          6
        </text>
        <text x="800" y="556">
          6
        </text>
      </g>
    </svg>
  );
}

function DocumentTab() {
  return (
    <div className="flex h-[39px] w-[166px] shrink-0 items-center rounded-b-[3px] border border-t-0 border-[#cfc8c2] bg-[#f9f6f4] pl-[8px]">
      <Icon size="size-[18px]">
        <path d="M1 2h16v6H8v4h8v6H8v8H1Z" fill="#c8342c" />
        <circle cx="19" cy="17" r="7.500" stroke="#2a3f8f" strokeWidth="4" strokeDasharray="3.500 2.400" />
        <circle cx="19" cy="17" r="5" stroke="#2a4fa8" strokeWidth="3.500" fill="#fff" />
      </Icon>
      <span className="pl-[11px]">Unnamed : 1*</span>
      <button type="button" aria-label="Close document" className="ml-[14px]">
        <svg viewBox="0 0 14 14" className="size-[14px]" aria-hidden="true">
          <circle cx="7" cy="7" r="6.500" fill="#b3aeab" />
          <path d="m4.500 4.500 5 5M9.500 4.500l-5 5" stroke="#fff" strokeWidth="1.600" />
        </svg>
      </button>
    </div>
  );
}

/* ---------- dependency graph ---------- */

const GRAPH = [
  { label: "Pocket", width: "w-[150px]" },
  { label: "Sketch001", width: "w-[204px]" },
  { label: "Pad", width: "w-[150px]" },
  { label: "Sketch", width: "w-[150px]" },
];

function DependencyGraph() {
  return (
    <section className="min-w-0 flex-[409] bg-white font-['Liberation_Serif',serif] text-[36px] leading-[40px] font-normal text-[#111]">
      <div className="flex h-full flex-col items-center justify-center pb-[3px] pl-[5px]">
        {GRAPH.map((node, i) => (
          <Fragment key={node.label}>
            {i > 0 && (
              <svg viewBox="0 0 24 99" className="h-[99px] w-[24px] shrink-0" aria-hidden="true">
                <path d="M12 0v75" stroke="#111" strokeWidth="2" />
                <path d="M1 71h22L12 99Z" />
              </svg>
            )}
            <div
              className={`flex h-[100px] shrink-0 items-center justify-center rounded-[34px] border-2 border-[#1c1c1c] bg-[#d3d3d3] pb-[3px] ${node.width}`}
            >
              {node.label}
            </div>
          </Fragment>
        ))}
      </div>
    </section>
  );
}

export default function App() {
  return (
    <div className="flex h-screen overflow-hidden bg-white font-['Open_Sans',sans-serif] text-[13px] font-bold text-[#2b2727]">
      <main className="flex min-w-0 flex-[1091] flex-col overflow-hidden bg-[#f2ebe6]">
        <nav className="flex h-[9px] shrink-0 items-end gap-[24px] overflow-hidden bg-linear-to-b from-[#cfc6c1] to-[#ece4df] pl-[13px] leading-[20px] whitespace-nowrap">
          {MENU.map((item) => (
            <a key={item} href="#" className="shrink-0">
              <span className="underline underline-offset-2">{item[0]}</span>
              {item.slice(1)}
            </a>
          ))}
        </nav>
        <div className="flex h-[54px] shrink-0 items-center overflow-hidden">
          <Grip className="w-[12px] pl-[2px]" />
          <div className="relative flex w-[192px] shrink-0 items-center">
            <select
              aria-label="Workbench"
              className="h-[26px] w-full appearance-none rounded-[3px] border border-[#d2cbc5] bg-[#fbf9f8] pl-[29px]"
            >
              <option>Part Design</option>
            </select>
            <svg viewBox="0 0 20 20" className="pointer-events-none absolute left-[6px] size-[20px]" aria-hidden="true">
              <path d="m3 7 5-4 11-1v12l-4 5H4Z" fill="#1d2fa5" stroke="#131d66" />
              <path d="m15 6 4-4v12l-4 5Z" fill="#15217a" />
              <path d="m1 3 4-2 6 7-3 2Z" fill="#e2c33c" />
            </svg>
            <ChevronDown className="pointer-events-none absolute right-[4px] size-[16px]" strokeWidth={2.5} />
          </div>
          <Grip className="w-[17px] items-center" />
          <Tools items={VIEW_TOOLS} />
        </div>
        <div className="flex h-[44px] shrink-0 items-center overflow-hidden pb-[2px]">
          <Grip className="w-[11px] pl-[2px]" />
          <Tools items={PART_TOOLS} />
        </div>
        <div className="flex min-h-0 flex-1">
          <ComboView />
          <div className="flex w-[7px] shrink-0 flex-col items-center justify-center gap-[2px]">
            <i className="h-px w-[5px] bg-[#d2cbc5]" />
            <i className="h-px w-[5px] bg-[#d2cbc5]" />
            <i className="h-px w-[5px] bg-[#d2cbc5]" />
          </div>
          <div className="flex min-w-0 flex-1 flex-col">
            <Viewport />
            <DocumentTab />
          </div>
        </div>
        <footer className="flex h-[39px] shrink-0 gap-[8px] pb-px">
          <div className="flex w-[637px] shrink-0 items-center border-b border-[#cfc8c2] pt-[5px]">
            <h2 className="flex-1">Report view</h2>
            <button type="button" aria-label="Float report view" className="mr-[6px]">
              <FloatIcon />
            </button>
            <button type="button" aria-label="Close report view" className="mr-[5px]">
              <CloseIcon />
            </button>
          </div>
          <h2 className="flex flex-1 items-center border-b border-[#cfc8c2] pt-[5px]">Python console</h2>
        </footer>
      </main>
      <DependencyGraph />
    </div>
  );
}
